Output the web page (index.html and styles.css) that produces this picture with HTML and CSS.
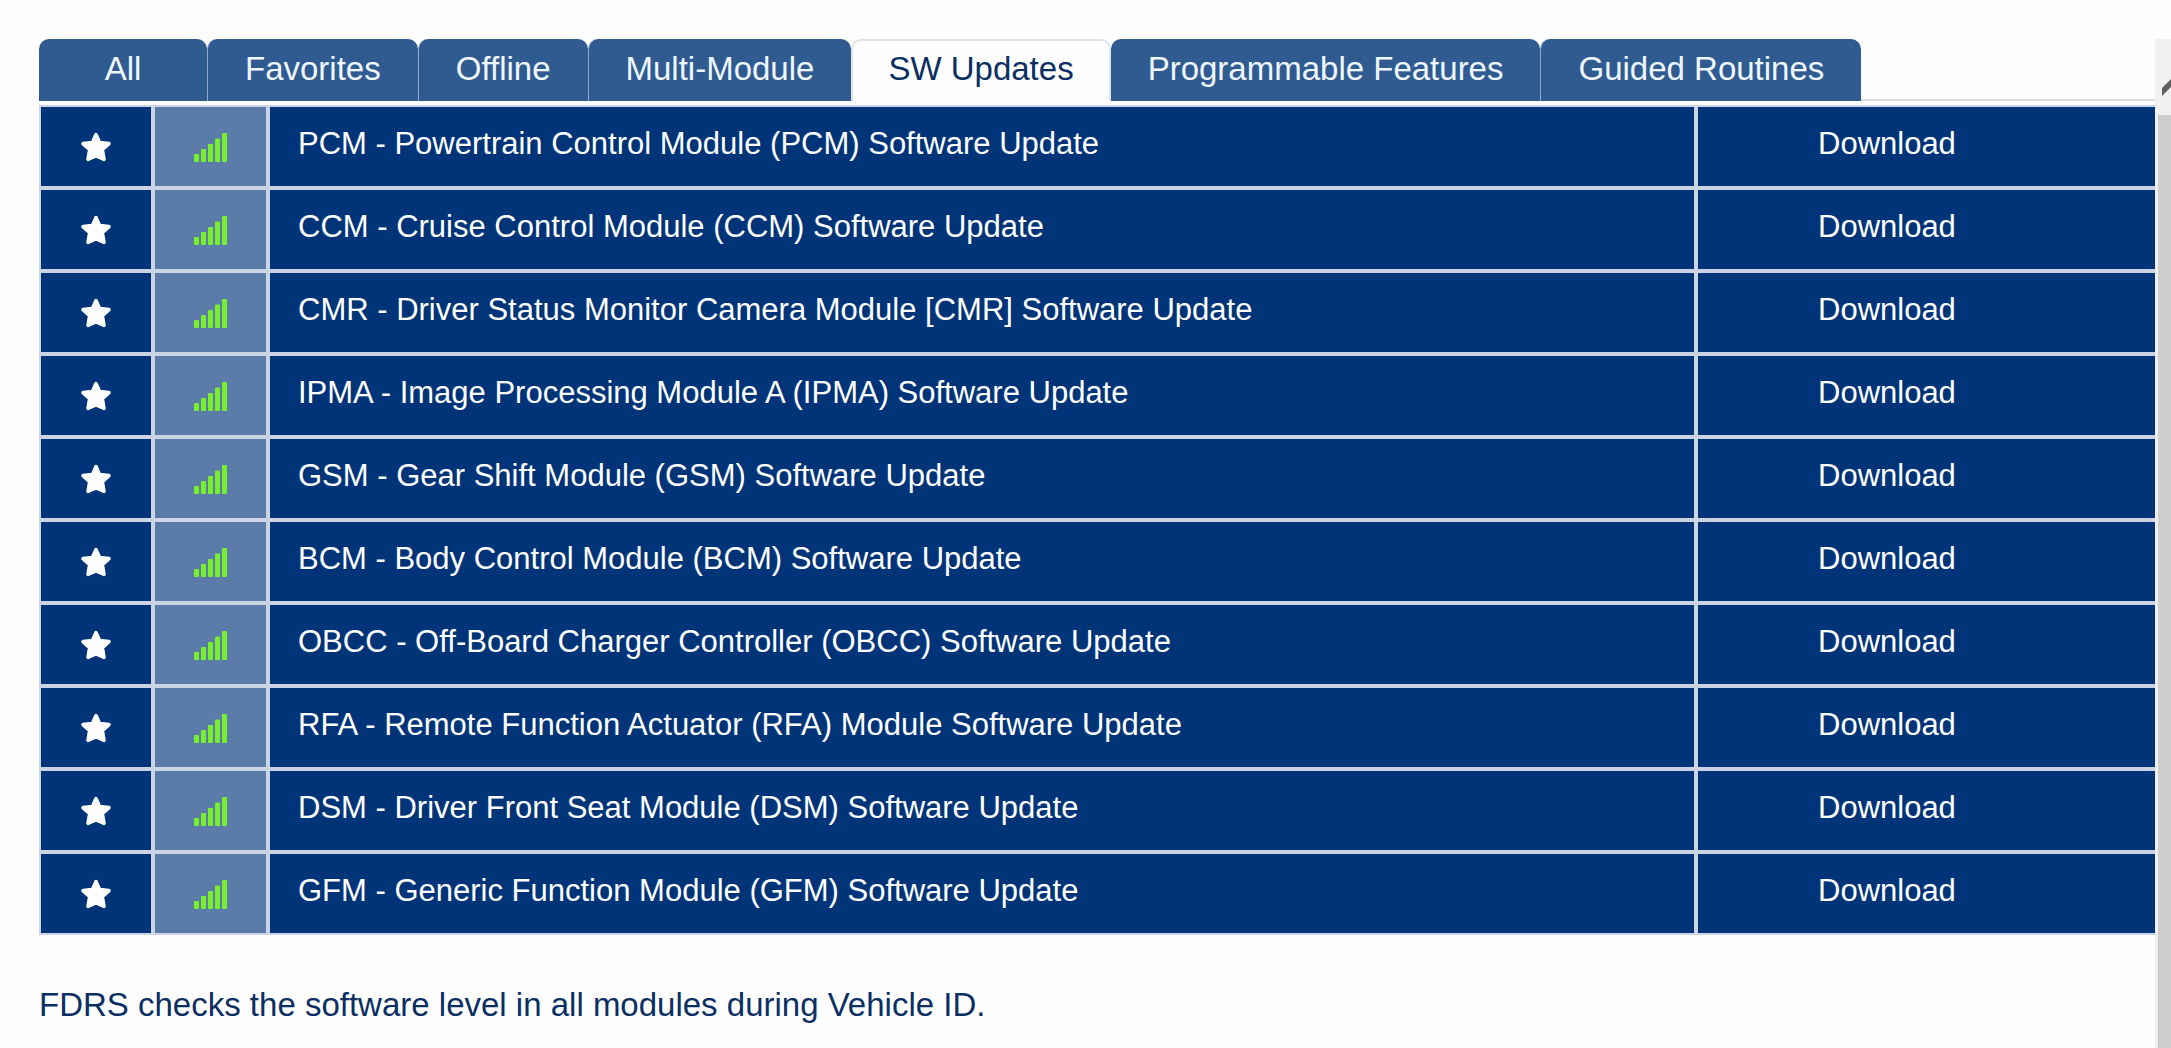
FILE: index.html
```html
<!DOCTYPE html>
<html lang="en">
<head>
<meta charset="utf-8">
<title>SW Updates</title>
<link rel="stylesheet" href="styles.css">
</head>
<body>
<svg class="sprite" aria-hidden="true">
  <symbol id="star" viewBox="0 0 30 30">
    <path d="M15 2.500 L18.600 10.400 L28 11.600 L21.400 17.800 L23 27.400 L15 24 L7 27.400 L8.600 17.800 L2 11.600 L11.400 10.400 Z" fill="currentColor" stroke="currentColor" stroke-width="3.500" stroke-linejoin="round"/>
  </symbol>
  <symbol id="signal" viewBox="0 0 34 30">
    <g fill="currentColor">
      <rect x="0" y="22" width="5" height="8" rx="1"/>
      <rect x="7" y="17" width="5" height="13" rx="1"/>
      <rect x="14" y="12" width="5" height="18" rx="1"/>
      <rect x="21" y="6.500" width="5" height="23.500" rx="1"/>
      <rect x="28" y="1" width="5" height="29" rx="1"/>
    </g>
  </symbol>
</svg>
<div class="page">
  <main class="content">
    <div class="tabs" role="tablist">
      <button class="tab" role="tab">All</button>
      <button class="tab" role="tab">Favorites</button>
      <button class="tab" role="tab">Offline</button>
      <button class="tab" role="tab">Multi-Module</button>
      <button class="tab active" role="tab" aria-selected="true">SW Updates</button>
      <button class="tab" role="tab">Programmable Features</button>
      <button class="tab" role="tab">Guided Routines</button>
    </div>
    <table class="updates">
      <colgroup><col class="col-star"><col class="col-signal"><col><col class="col-action"></colgroup>
      <tbody>
        <tr><td class="icon-cell"><button class="star" aria-label="Favorite PCM"><svg class="star-icon"><use href="#star"/></svg></button></td><td class="icon-cell signal"><svg class="signal-icon"><use href="#signal"/></svg></td><td class="name">PCM - Powertrain Control Module (PCM) Software Update</td><td class="action"><button class="download">Download</button></td></tr>
        <tr><td class="icon-cell"><button class="star" aria-label="Favorite CCM"><svg class="star-icon"><use href="#star"/></svg></button></td><td class="icon-cell signal"><svg class="signal-icon"><use href="#signal"/></svg></td><td class="name">CCM - Cruise Control Module (CCM) Software Update</td><td class="action"><button class="download">Download</button></td></tr>
        <tr><td class="icon-cell"><button class="star" aria-label="Favorite CMR"><svg class="star-icon"><use href="#star"/></svg></button></td><td class="icon-cell signal"><svg class="signal-icon"><use href="#signal"/></svg></td><td class="name">CMR - Driver Status Monitor Camera Module [CMR] Software Update</td><td class="action"><button class="download">Download</button></td></tr>
        <tr><td class="icon-cell"><button class="star" aria-label="Favorite IPMA"><svg class="star-icon"><use href="#star"/></svg></button></td><td class="icon-cell signal"><svg class="signal-icon"><use href="#signal"/></svg></td><td class="name">IPMA - Image Processing Module A (IPMA) Software Update</td><td class="action"><button class="download">Download</button></td></tr>
        <tr><td class="icon-cell"><button class="star" aria-label="Favorite GSM"><svg class="star-icon"><use href="#star"/></svg></button></td><td class="icon-cell signal"><svg class="signal-icon"><use href="#signal"/></svg></td><td class="name">GSM - Gear Shift Module (GSM) Software Update</td><td class="action"><button class="download">Download</button></td></tr>
        <tr><td class="icon-cell"><button class="star" aria-label="Favorite BCM"><svg class="star-icon"><use href="#star"/></svg></button></td><td class="icon-cell signal"><svg class="signal-icon"><use href="#signal"/></svg></td><td class="name">BCM - Body Control Module (BCM) Software Update</td><td class="action"><button class="download">Download</button></td></tr>
        <tr><td class="icon-cell"><button class="star" aria-label="Favorite OBCC"><svg class="star-icon"><use href="#star"/></svg></button></td><td class="icon-cell signal"><svg class="signal-icon"><use href="#signal"/></svg></td><td class="name">OBCC - Off-Board Charger Controller (OBCC) Software Update</td><td class="action"><button class="download">Download</button></td></tr>
        <tr><td class="icon-cell"><button class="star" aria-label="Favorite RFA"><svg class="star-icon"><use href="#star"/></svg></button></td><td class="icon-cell signal"><svg class="signal-icon"><use href="#signal"/></svg></td><td class="name">RFA - Remote Function Actuator (RFA) Module Software Update</td><td class="action"><button class="download">Download</button></td></tr>
        <tr><td class="icon-cell"><button class="star" aria-label="Favorite DSM"><svg class="star-icon"><use href="#star"/></svg></button></td><td class="icon-cell signal"><svg class="signal-icon"><use href="#signal"/></svg></td><td class="name">DSM - Driver Front Seat Module (DSM) Software Update</td><td class="action"><button class="download">Download</button></td></tr>
        <tr><td class="icon-cell"><button class="star" aria-label="Favorite GFM"><svg class="star-icon"><use href="#star"/></svg></button></td><td class="icon-cell signal"><svg class="signal-icon"><use href="#signal"/></svg></td><td class="name">GFM - Generic Function Module (GFM) Software Update</td><td class="action"><button class="download">Download</button></td></tr>
      </tbody>
    </table>
    <p class="note">FDRS checks the software level in all modules during Vehicle ID.</p>
  </main>
  <div class="scroller">
    <button class="scroll-up" aria-label="Scroll up"><svg class="chevron" viewBox="0 0 28 24"><path d="M0 16 L14 2 L28 16 V24 L14 10 L0 24 Z" fill="#606060"/></svg></button>
    <div class="thumb"></div>
  </div>
</div>
</body>
</html>
```

FILE: styles.css
```css
* {
  box-sizing: border-box;
}

body {
  margin: 0;
  background: #fefefe;
  color: #0b2f63;
  font-family: "Liberation Sans", Arial, sans-serif;
  font-size: 33px;
  line-height: 40px;
}

button {
  margin: 0;
  border: 0;
  padding: 0;
  background: none;
  color: inherit;
  font: inherit;
  cursor: pointer;
}

.sprite {
  display: none;
}

.page {
  display: flex;
  min-height: 100vh;
  padding-top: 39px;
}

.content {
  flex: 1;
  min-width: 0;
  padding-left: 39px;
}

.tabs {
  display: flex;
  margin-bottom: 4px;
  border-bottom: 2px solid #dedede;
}

.tab {
  min-width: 168px;
  margin-bottom: -2px;
  padding: 10px 37px 12px;
  border-radius: 10px 10px 0 0;
  background: #305b91;
  color: #eef7ff;
  white-space: nowrap;
}

.tab + .tab {
  border-left: 1px solid #8ea8c8;
}

.tab.active {
  padding: 8px 35px 12px;
  border: 2px solid #dfe3ea;
  border-bottom: 0;
  background: #fefefe;
  color: #0b2f63;
}

.tab.active + .tab {
  border-left: 0;
}

.updates {
  width: 100%;
  border-spacing: 0;
  table-layout: fixed;
  color: #fff;
  font-size: 31px;
}

.col-star {
  width: 114px;
}

.col-signal {
  width: 115px;
}

.col-action {
  width: 459px;
}

.updates td {
  height: 83px;
  border: 2px solid #cbd4e4;
  background: #003478;
  text-align: left;
}

.updates .icon-cell {
  padding: 0;
  text-align: center;
}

.updates .signal {
  background: #5b7ba9;
  color: #77ee2e;
}

.updates .name {
  padding: 17px 28px 22px;
}

.updates .action {
  padding: 17px 0 22px 120px;
  border-right: 0;
}

.download,
.star {
  display: block;
}

.star {
  margin: 0 auto;
}

.star-icon,
.signal-icon {
  display: block;
  width: 30px;
  height: 30px;
  margin: 0 auto;
}

.signal-icon {
  width: 34px;
}

.note {
  margin: 0;
  padding: 50px 0 20px;
}

.scroller {
  display: flex;
  flex-direction: column;
  width: 16px;
  overflow: hidden;
  background: #f0f0f0;
}

.scroll-up {
  height: 76px;
  padding-left: 7px;
}

.chevron {
  display: block;
  width: 28px;
  height: 24px;
  margin-top: 14px;
}

.thumb {
  flex: 1;
  margin-left: 3px;
  background: #cdcdcd;
}
```
